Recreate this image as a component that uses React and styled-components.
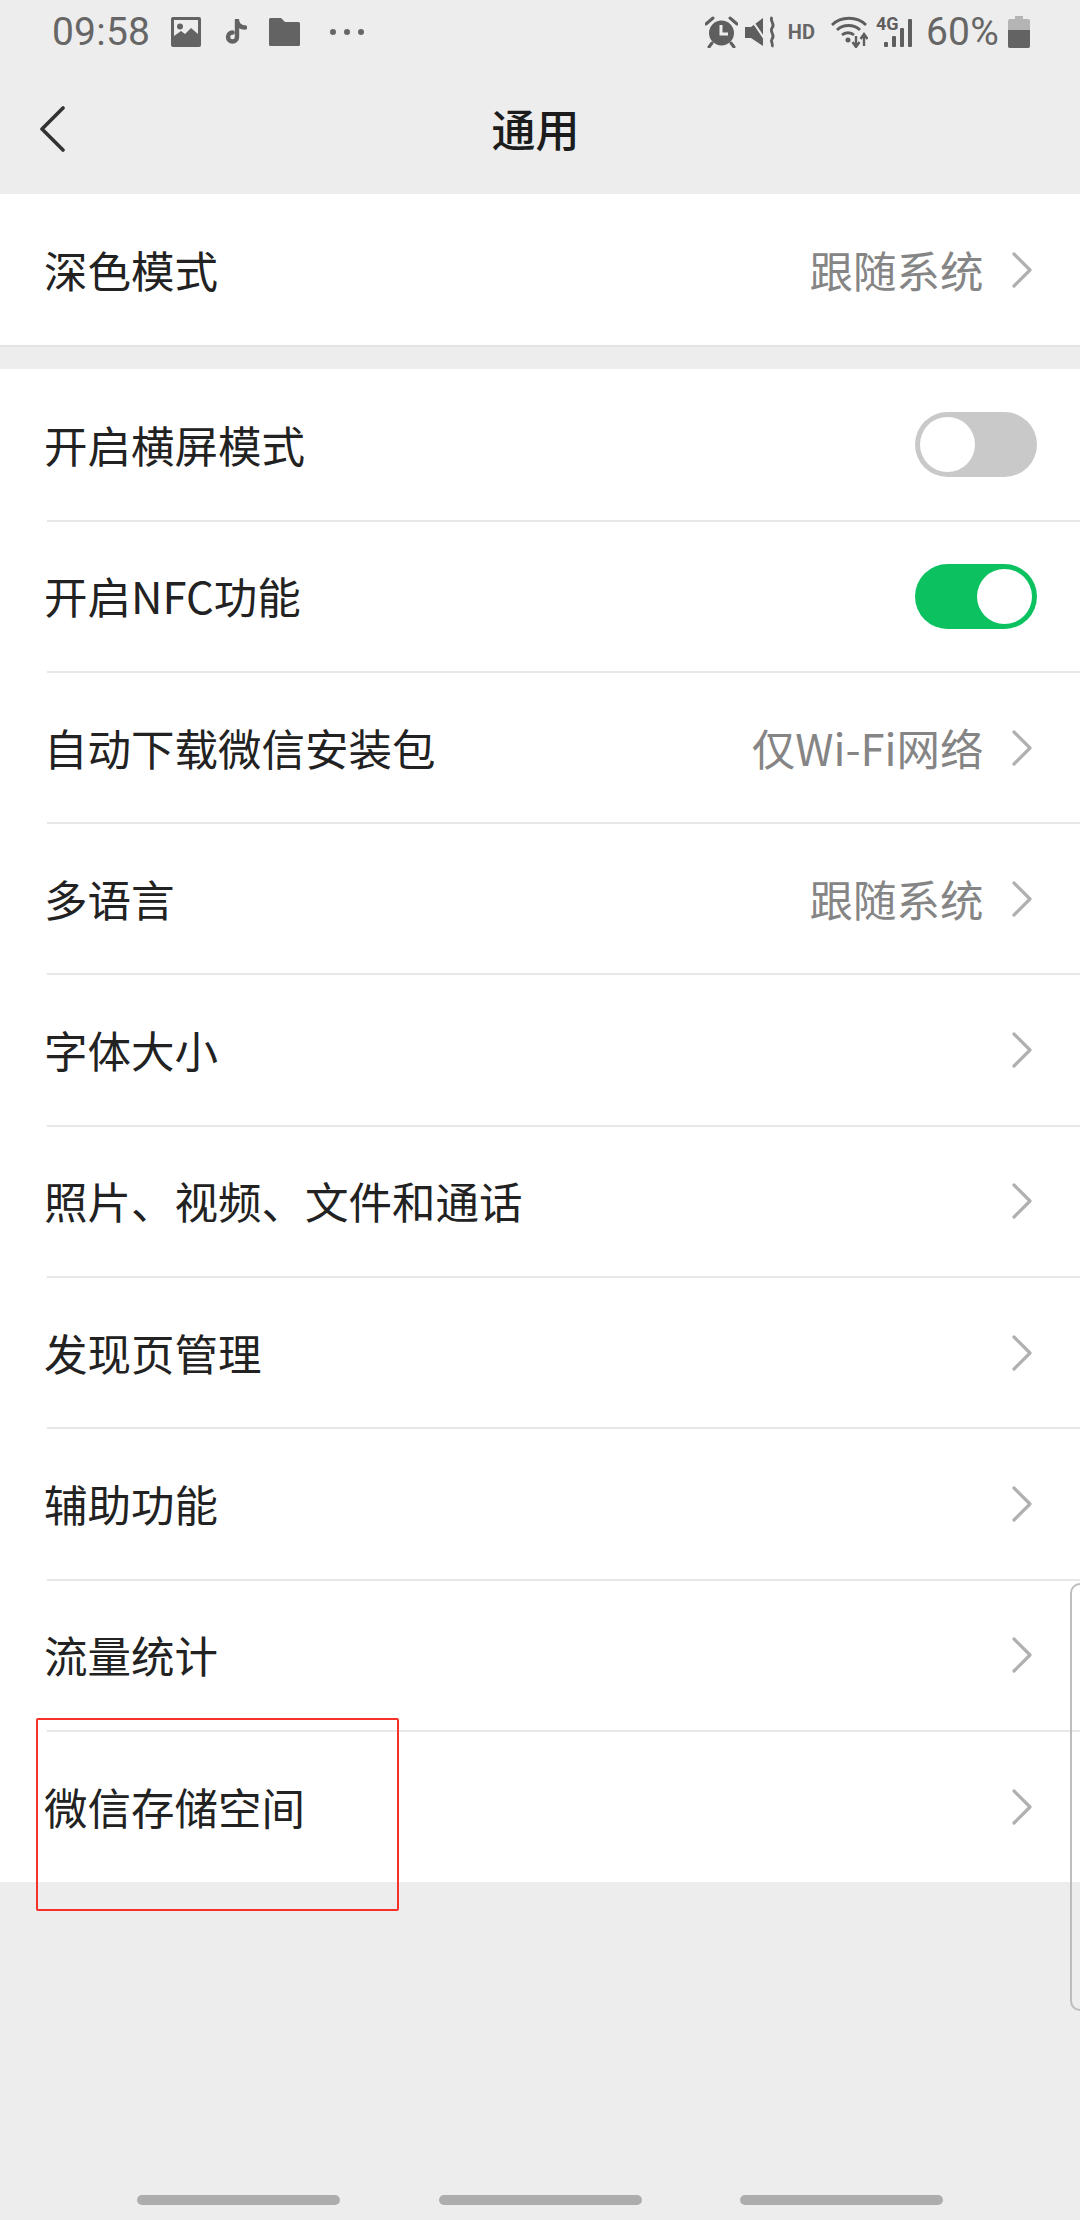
import React from 'react';
import styled, { createGlobalStyle } from 'styled-components';

const GlobalStyle = createGlobalStyle`
  html, body {
    margin: 0;
    padding: 0;
    background: #ededed;
  }
  * {
    box-sizing: border-box;
  }
`;

const Page = styled.div`
  position: relative;
  width: 1080px;
  height: 2220px;
  overflow: hidden;
  background: #ededed;
  font-family: "Noto Sans CJK SC", "Noto Sans", sans-serif;
  color: #222;
`;

const StatusBar = styled.div`
  display: flex;
  align-items: center;
  justify-content: space-between;
  height: 64px;
  padding: 0 50px 0 52px;
  color: #666;
`;

const StatusGroup = styled.div`
  display: flex;
  align-items: center;
`;

const StatusText = styled.span`
  font-family: Roboto, "Noto Sans", sans-serif;
  font-size: 39px;
  line-height: 64px;
  letter-spacing: 0.2px;
  margin-right: ${(p) => p.$gap || 0}px;
`;

const StatusIcon = styled.svg`
  display: block;
  flex: none;
  margin-right: ${(p) => p.$gap || 0}px;
`;

const NavBar = styled.div`
  position: relative;
  display: flex;
  align-items: center;
  justify-content: center;
  height: 130px;
  padding: 0 9px 2px 0;
`;

const BackIcon = styled.svg`
  position: absolute;
  left: 39px;
  top: 42px;
`;

const NavTitle = styled.h1`
  margin: 0;
  font-size: 44px;
  font-weight: 500;
  line-height: 60px;
  color: #1c1c1c;
`;

const Section = styled.div`
  background: #fff;
  border-bottom: ${(p) => (p.$edge ? '2px solid #e4e4e4' : 'none')};
  margin-bottom: ${(p) => p.$gap || 0}px;
`;

const Row = styled.div`
  position: relative;
  display: flex;
  align-items: center;
  height: 151.3px;
  padding: 0 42px 0 44px;

  & + &::before {
    content: '';
    position: absolute;
    left: 47px;
    right: 0;
    top: -1px;
    height: 2px;
    background: #e8e8e8;
  }
`;

const Label = styled.span`
  flex: 1;
  font-size: 43.5px;
  line-height: 60px;
  color: #222;
`;

const Value = styled.span`
  font-size: 43.5px;
  line-height: 60px;
  color: #858585;
  margin-right: 28px;
`;

const Chevron = styled.svg`
  display: block;
  flex: none;
  margin-right: 6.5px;
`;

const Toggle = styled.div`
  display: flex;
  justify-content: ${(p) => (p.$on ? 'flex-end' : 'flex-start')};
  width: 122px;
  height: 65px;
  padding: 5px;
  margin-right: 1px;
  border-radius: 33px;
  background: ${(p) => (p.$on ? '#0bc160' : '#c9c9c9')};
`;

const Knob = styled.div`
  width: 55px;
  height: 55px;
  border-radius: 50%;
  background: #fff;
`;

const HighlightBox = styled.div`
  position: absolute;
  left: 36px;
  top: 1718px;
  width: 363px;
  height: 193px;
  border: 2px solid #f5312a;
  border-radius: 2px;
`;

const ScrollHandle = styled.div`
  position: absolute;
  left: 1070px;
  top: 1583px;
  width: 20px;
  height: 428px;
  border: 2px solid #bdbdbd;
  border-radius: 14px;
`;

const GestureBar = styled.div`
  position: absolute;
  left: 0;
  right: 0;
  bottom: 15px;
  display: flex;
  justify-content: center;
  gap: 98.5px;
`;

const GesturePill = styled.div`
  width: 203px;
  height: 10px;
  border-radius: 5px;
  background: #adadad;
`;

const HdLabel = styled.span`
  font-family: Roboto, sans-serif;
  font-size: 20px;
  font-weight: 700;
  line-height: 20px;
  margin-right: 16px;
  color: #666;
`;

const RowChevron = () => (
  <Chevron width="20" height="36" viewBox="0 0 20 36" fill="none">
    <path d="M2 2 L18 18 L2 34" stroke="#b0b0b0" strokeWidth="3.2" strokeLinecap="round" strokeLinejoin="round" />
  </Chevron>
);

const ImageIcon = () => (
  <StatusIcon $gap={23} width="30" height="30" viewBox="0 0 30 30">
    <rect width="30" height="30" rx="2" fill="#636363" />
    <rect x="3" y="3" width="24" height="18" fill="#ededed" />
    <circle cx="9" cy="9.5" r="3" fill="#636363" />
    <path d="M3 21 L3 19 L10 14 L14 17 L20 11 L27 17 L27 21 Z" fill="#636363" />
  </StatusIcon>
);

const TiktokIcon = () => (
  <StatusIcon $gap={22} width="23" height="26" viewBox="0 0 23 26">
    <path
      d="M13 1 V18 A4.500 4.500 0 1 1 8.500 13.500 M13 2 C14 6 17 8.500 21 8.500"
      fill="none"
      stroke="#636363"
      strokeWidth="4.400"
      strokeLinecap="round"
    />
  </StatusIcon>
);

const FolderIcon = () => (
  <StatusIcon $gap={29} width="31" height="28" viewBox="0 0 31 28">
    <path d="M1.500 0 H12 L16 4 H29.500 A1.500 1.500 0 0 1 31 5.500 V26.500 A1.500 1.500 0 0 1 29.500 28 H1.500 A1.500 1.500 0 0 1 0 26.500 V1.500 A1.500 1.500 0 0 1 1.500 0 Z" fill="#636363" />
  </StatusIcon>
);

const MoreIcon = () => (
  <StatusIcon width="36" height="8" viewBox="0 0 36 8">
    <circle cx="4" cy="4" r="3" fill="#666" />
    <circle cx="18" cy="4" r="3" fill="#666" />
    <circle cx="32" cy="4" r="3" fill="#666" />
  </StatusIcon>
);

const AlarmIcon = () => (
  <StatusIcon $gap={7} width="33" height="32" viewBox="0 0 33 32">
    <circle cx="16.500" cy="17" r="12.500" fill="#5e5e5e" />
    <path d="M16 9 V18 H23" fill="none" stroke="#ededed" strokeWidth="3" />
    <path d="M1 8 L8 2 M32 8 L25 2 M7 27 L4 31 M26 27 L29 31" stroke="#5e5e5e" strokeWidth="3" strokeLinecap="round" />
  </StatusIcon>
);

const MuteIcon = () => (
  <StatusIcon $gap={11} width="32" height="32" viewBox="0 0 32 32">
    <path d="M0 11 H6 L18 2 V30 L6 22 H0 Z" fill="#5e5e5e" />
    <path d="M4 0 L23 28" stroke="#ededed" strokeWidth="2" />
    <path d="M27 1 C24 5 31 8 27 12 C24 16 31 19 27 23 C25 26 29 28 27 31" fill="none" stroke="#5e5e5e" strokeWidth="2.800" />
  </StatusIcon>
);

const WifiIcon = () => (
  <StatusIcon $gap={8} width="37" height="32" viewBox="0 0 37 32">
    <path d="M1 9 C10 0 26 0 35 9 M6 14 C12 8 23 8 29 14 M11 19 C14 16 20 16 23 19" fill="none" stroke="#5e5e5e" strokeWidth="2.800" />
    <circle cx="17" cy="24" r="2.500" fill="#5e5e5e" />
    <path d="M25 20 V29 M21.500 26 L25 31 L28.500 26" fill="none" stroke="#5e5e5e" strokeWidth="2.400" />
    <path d="M33 30 V20 M29.500 23 L33 18 L36.500 23" fill="none" stroke="#5e5e5e" strokeWidth="2.400" />
  </StatusIcon>
);

const SignalIcon = () => (
  <StatusIcon $gap={13} width="37" height="32" viewBox="0 0 37 32" fill="#5e5e5e">
    <rect x="8" y="26" width="4" height="5" rx="1" />
    <rect x="16" y="20" width="4" height="11" rx="1" />
    <rect x="24" y="12" width="4" height="19" rx="1" />
    <rect x="32" y="3" width="4" height="28" rx="1" />
    <text x="0" y="14" fontFamily="Roboto, sans-serif" fontSize="18" fontWeight="700">4G</text>
  </StatusIcon>
);

const BatteryIcon = () => (
  <StatusIcon width="22" height="32" viewBox="0 0 22 32">
    <path d="M7 0 H15 V3 H20 A2 2 0 0 1 22 5 V30 A2 2 0 0 1 20 32 H2 A2 2 0 0 1 0 30 V5 A2 2 0 0 1 2 3 H7 Z" fill="#b4b4b4" />
    <path d="M0 14 H22 V30 A2 2 0 0 1 20 32 H2 A2 2 0 0 1 0 30 Z" fill="#636363" />
  </StatusIcon>
);

const App = () => (
  <Page>
    <GlobalStyle />
    <StatusBar>
      <StatusGroup>
        <StatusText $gap={21}>09:58</StatusText>
        <ImageIcon />
        <TiktokIcon />
        <FolderIcon />
        <MoreIcon />
      </StatusGroup>
      <StatusGroup>
        <AlarmIcon />
        <MuteIcon />
        <HdLabel>HD</HdLabel>
        <WifiIcon />
        <SignalIcon />
        <StatusText $gap={9}>60%</StatusText>
        <BatteryIcon />
      </StatusGroup>
    </StatusBar>

    <NavBar>
      <BackIcon width="26" height="46" viewBox="0 0 26 46" fill="none">
        <path d="M24 2 L3 23 L24 44" stroke="#333" strokeWidth="3.600" strokeLinecap="round" strokeLinejoin="round" />
      </BackIcon>
      <NavTitle>通用</NavTitle>
    </NavBar>

    <Section $edge $gap={22}>
      <Row>
        <Label>深色模式</Label>
        <Value>跟随系统</Value>
        <RowChevron />
      </Row>
    </Section>

    <Section>
      <Row>
        <Label>开启横屏模式</Label>
        <Toggle><Knob /></Toggle>
      </Row>
      <Row>
        <Label>开启NFC功能</Label>
        <Toggle $on><Knob /></Toggle>
      </Row>
      <Row>
        <Label>自动下载微信安装包</Label>
        <Value>仅Wi-Fi网络</Value>
        <RowChevron />
      </Row>
      <Row>
        <Label>多语言</Label>
        <Value>跟随系统</Value>
        <RowChevron />
      </Row>
      <Row>
        <Label>字体大小</Label>
        <RowChevron />
      </Row>
      <Row>
        <Label>照片、视频、文件和通话</Label>
        <RowChevron />
      </Row>
      <Row>
        <Label>发现页管理</Label>
        <RowChevron />
      </Row>
      <Row>
        <Label>辅助功能</Label>
        <RowChevron />
      </Row>
      <Row>
        <Label>流量统计</Label>
        <RowChevron />
      </Row>
      <Row>
        <Label>微信存储空间</Label>
        <RowChevron />
      </Row>
    </Section>

    <HighlightBox />
    <ScrollHandle />
    <GestureBar>
      <GesturePill />
      <GesturePill />
      <GesturePill />
    </GestureBar>
  </Page>
);

export default App;
